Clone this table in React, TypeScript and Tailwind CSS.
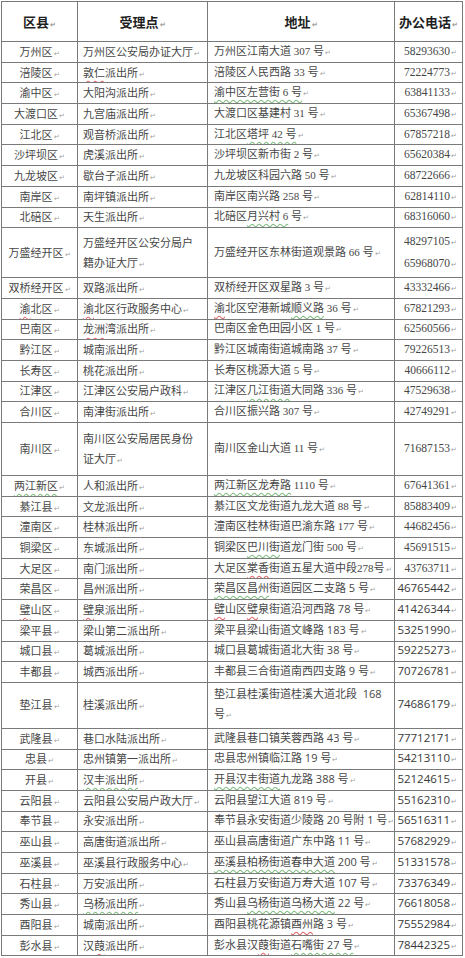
import React from "react";

// 区县办证点一览表 (Word table screenshot)
type Row = { a: string; b: string; c: string; d: string; h?: string; sans?: boolean };

const rows: Row[] = [
  { a: "万州区", b: "万州区公安局办证大厅", c: "万州区江南大道 307 号", d: "58293630" },
  { a: "涪陵区", b: "{r:敦仁}派出所", c: "涪陵区人民西路 33 号", d: "72224773" },
  { a: "渝中区", b: "大阳沟派出所", c: "{g:渝中区左营街 6 号}", d: "63841133" },
  { a: "大渡口区", b: "九宫庙派出所", c: "大渡口区基建村 31 号", d: "65367498" },
  { a: "江北区", b: "观音桥派出所", c: "江北区{g:塔坪 42 号}", d: "67857218" },
  { a: "沙坪坝区", b: "虎溪派出所", c: "沙坪坝区新市街 2 号", d: "65620384" },
  { a: "九龙坡区", b: "歇台子派出所", c: "九龙坡区科园六路 50 号", d: "68722666" },
  { a: "南岸区", b: "南坪镇派出所", c: "南岸区南兴路 258 号", d: "62814110" },
  { a: "北碚区", b: "天生派出所", c: "北碚区{g:月兴村 6} 号", d: "68316060" },
  {
    a: "万盛经开区",
    b: "万盛经开区公安分局户\n籍办证大厅",
    c: "万盛经开区东林街道观景路 66 号",
    d: "48297105\n65968070",
    h: "h-[50px]",
  },
  { a: "双桥经开区", b: "双路派出所", c: "双桥经开区双星路 3 号", d: "43332466" },
  { a: "{r:渝}北区", b: "{r:渝}北区行政服务中心", c: "{r:渝}北区空港新城{g:顺义路} 36 号", d: "67821293" },
  { a: "巴南区", b: "{r:龙洲}湾派出所", c: "巴南区金色田园小区 1 号", d: "62560566" },
  { a: "黔江区", b: "城南派出所", c: "黔江区城南街道城南路 37 号", d: "79226513" },
  { a: "长寿区", b: "桃花派出所", c: "长寿区桃源大道 5 号", d: "40666112" },
  { a: "江津区", b: "江津区公安局户政科", c: "江津区{g:几江街道}大同路 336 号", d: "47529638" },
  { a: "合川区", b: "南津街派出所", c: "合川区振兴路 307 号", d: "42749291" },
  {
    a: "南川区",
    b: "南川区公安局居民身份\n证大厅",
    c: "南川区金山大道 11 号",
    d: "71687153",
    h: "h-[53px]",
  },
  { a: "{g:两江新区}", b: "人和派出所", c: "{g:两江新区龙寿路} 1110 号", d: "67641361" },
  { a: "綦江县", b: "文龙派出所", c: "綦江区文龙街道九龙大道 88 号", d: "85883409" },
  { a: "潼南区", b: "桂林派出所", c: "潼南区桂林街道巴渝东路 177 号", d: "44682456" },
  { a: "铜梁区", b: "东城派出所", c: "铜梁区{g:巴川街}道龙门街 500 号", d: "45691515" },
  { a: "大足区", b: "南门派出所", c: "大足区{r:棠香}街道五星大道中段278号", d: "43763711" },
  { a: "荣昌区", b: "昌州派出所", c: "{g:荣昌区昌州}街道园区二支路 5 号", d: "46765442", sans: true },
  { a: "{r:璧}山区", b: "{r:璧}泉派出所", c: "{r:璧}山区{r:璧}泉街道沿河西路 78 号", d: "41426344", sans: true },
  { a: "梁平县", b: "梁山第二派出所", c: "梁平县梁山街道文峰路 183 号", d: "53251990", sans: true },
  { a: "城口县", b: "葛城派出所", c: "城口县葛城街道北大街 38 号", d: "59225273", sans: true },
  { a: "丰都县", b: "城西派出所", c: "丰都县三合街道南西四支路 9 号", d: "70726781", sans: true },
  {
    a: "垫江县",
    b: "桂溪派出所",
    c: "垫江县桂溪街道桂溪大道北段  168\n号",
    d: "74686179",
    h: "h-[46px]",
    sans: true,
  },
  { a: "武隆县", b: "巷口水陆派出所", c: "武隆县巷口镇芙蓉西路 43 号", d: "77712171", sans: true },
  { a: "忠县", b: "忠州镇第一派出所", c: "忠县忠州镇临江路 19 号", d: "54213110", sans: true },
  { a: "开县", b: "{g:汉丰派出所}", c: "{g:开县汉丰街道}九龙路 388 号", d: "52124615", sans: true },
  { a: "云阳县", b: "云阳县公安局户政大厅", c: "云阳县望江大道 819 号", d: "55162310", sans: true },
  { a: "奉节县", b: "永安派出所", c: "奉节县永安街道少陵路 20 号附 1 号", d: "56516311", sans: true },
  { a: "巫山县", b: "高唐街道派出所", c: "巫山县高唐街道广东中路 11 号", d: "57682929", sans: true },
  { a: "巫溪县", b: "巫溪县行政服务中心", c: "{g:巫溪县柏杨街道春申大道} 200 号", d: "51331578", sans: true },
  { a: "石柱县", b: "万安派出所", c: "石柱县万安街道万寿大道 107 号", d: "73376349", sans: true },
  { a: "秀山县", b: "{g:乌杨派出所}", c: "秀山县{g:乌杨街道乌杨大道} 22 号", d: "76618058", sans: true },
  { a: "酉阳县", b: "城南派出所", c: "酉阳县桃花源镇{r:酉州}路 3 号", d: "75552984", sans: true },
  { a: "彭水县", b: "汉{r:葭}派出所", c: "彭水县汉{r:葭}街道{g:石嘴街 27 号}", d: "78442325", sans: true },
];

function Rich({ text }: { text: string }) {
  const parts = text.split(/(\{[rg]:[^}]*\})/).filter(Boolean);
  return (
    <>
      {parts.map((p, i) => {
        const m = p.match(/^\{([rg]):(.*)\}$/);
        if (!m) return <span key={i}>{p}</span>;
        return (
          <span
            key={i}
            className={
              m[1] === "r"
                ? "underline decoration-wavy decoration-[#e06363] underline-offset-[3px]"
                : "underline decoration-wavy decoration-[#7dbb7d] underline-offset-[3px]"
            }
          >
            {m[2]}
          </span>
        );
      })}
    </>
  );
}

function Mark() {
  return <span className="ml-[1px] text-[7px] text-[#a0a0a0]">↵</span>;
}

// paragraphs: every line ends with a mark; wrapped: only the last one
function Lines({ text, paragraphs = false }: { text: string; paragraphs?: boolean }) {
  const lines = text.split("\n");
  return (
    <div className="whitespace-pre">
      {lines.map((l, i) => (
        <div key={i} className={lines.length > 1 ? "leading-[20px]" : "leading-[14px]"}>
          <Rich text={l} />
          {(paragraphs || i === lines.length - 1) && <Mark />}
        </div>
      ))}
    </div>
  );
}

const cell = "flex items-center border-r border-b border-[#7a7a7a] overflow-hidden";

export default function App() {
  return (
    <div className="bg-white w-[465px] h-[958px] pt-[1px] pl-[1px] text-[#464646] font-['Noto_Sans_CJK_SC',sans-serif]">
      <div className="w-[462px] border-l border-t border-[#7a7a7a]">
        {/* header */}
        <div className="grid grid-cols-[76px_130px_187px_68px] h-[40px] text-[13px] font-bold text-[#1f1f1f]">
          <div className={`${cell} justify-center`}>
            <span>区县<Mark /></span>
          </div>
          <div className={`${cell} justify-center`}>
            <span>受理点<Mark /></span>
          </div>
          <div className={`${cell} justify-center`}>
            <span>地址<Mark /></span>
          </div>
          <div className={`${cell} justify-center`}>
            <span>办公电话<Mark /></span>
          </div>
        </div>

        {rows.map((r, i) => (
          <div
            key={i}
            className={`grid grid-cols-[76px_130px_187px_68px] text-[11px] ${r.h ?? "h-[20.7px]"}`}
          >
            <div className={`${cell} justify-center`}>
              <Lines text={r.a} />
            </div>
            <div className={`${cell} pl-[5px]`}>
              <Lines text={r.b} />
            </div>
            <div
              className={`${cell} pl-[6px] ${
                r.sans
                  ? "font-['Open_Sans','Noto_Sans_CJK_SC',sans-serif]"
                  : "font-['Liberation_Serif','Noto_Sans_CJK_SC',serif]"
              }`}
            >
              <Lines text={r.c} />
            </div>
            <div
              className={`${cell} justify-end pr-[5px] text-right ${
                r.sans
                  ? "font-['Open_Sans',sans-serif] text-[11.5px] text-[#3a3a3a]"
                  : "font-['Liberation_Serif',serif] text-[11.5px]"
              }`}
            >
              <Lines text={r.d} paragraphs />
            </div>
          </div>
        ))}
      </div>
    </div>
  );
}
